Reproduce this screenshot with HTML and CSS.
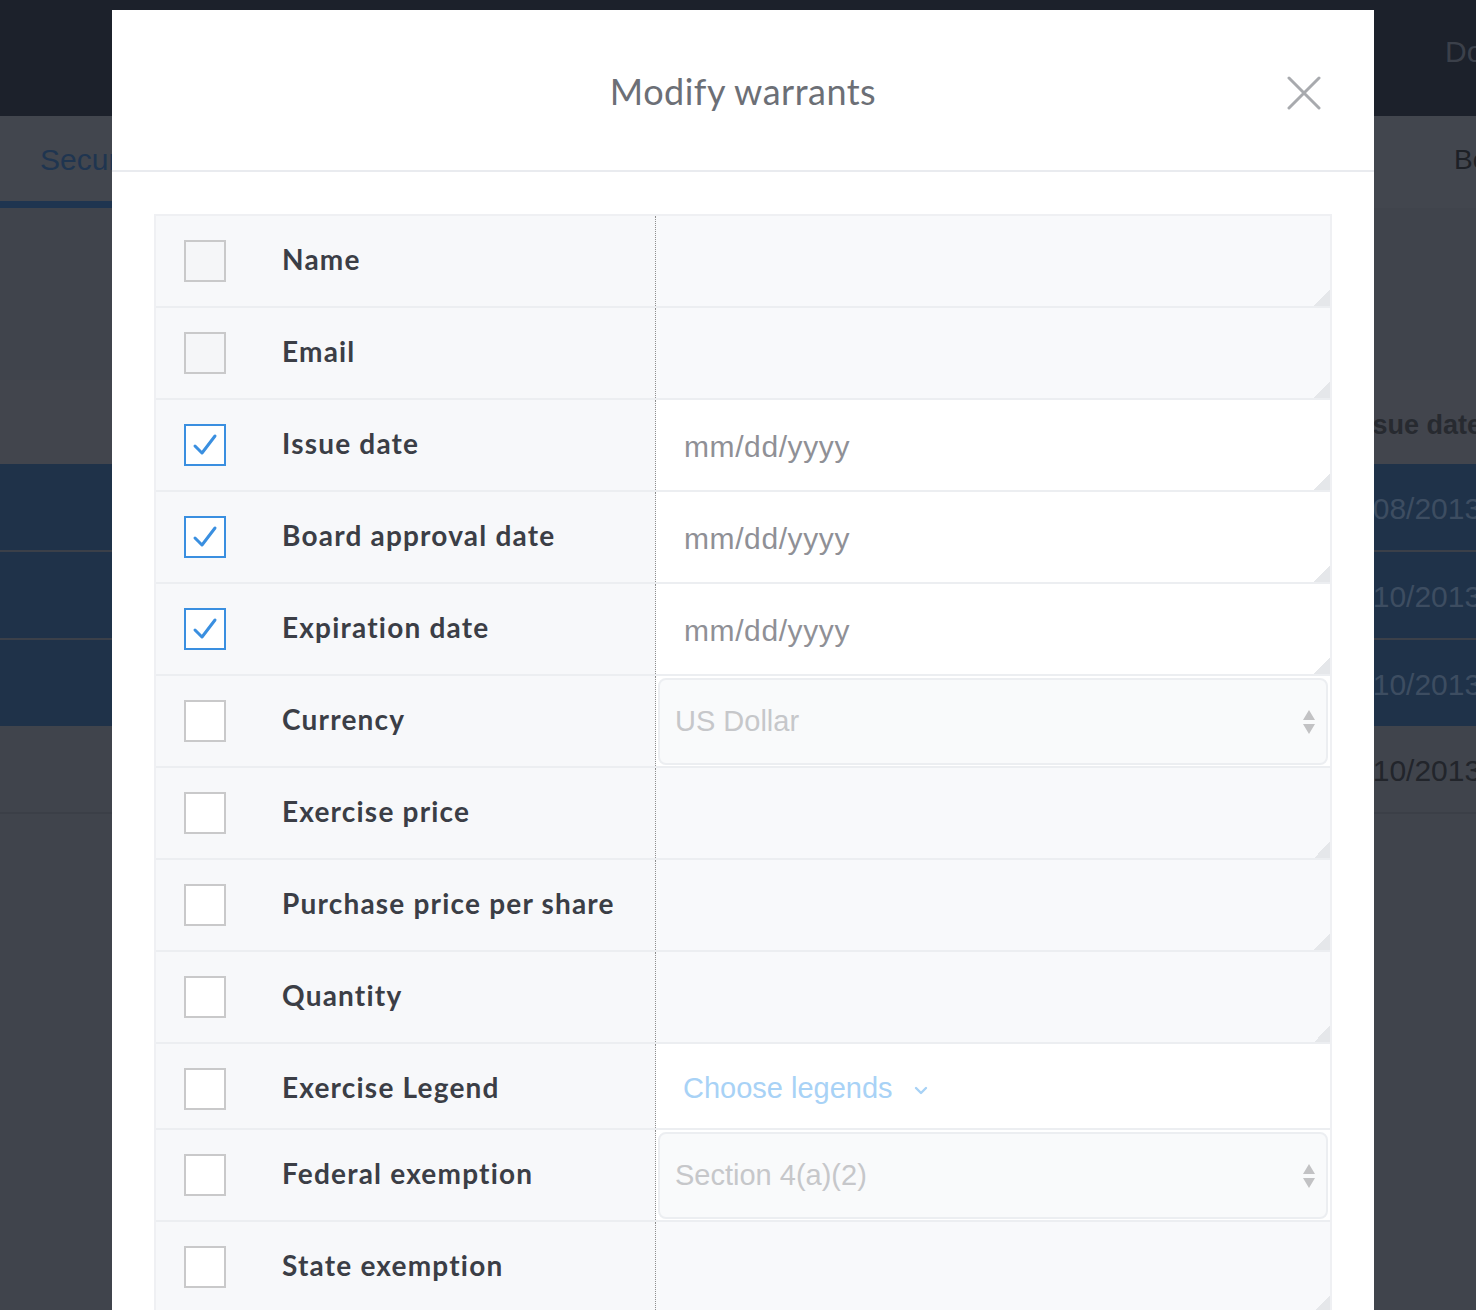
FILE: index.html
```html
<!DOCTYPE html>
<html lang="en">
<head>
<meta charset="utf-8">
<title>Modify warrants</title>
<link rel="stylesheet" href="styles.css">
</head>
<body>
<div class="app">
  <header class="topbar">
    <span class="topnav">Documents</span>
  </header>
  <nav class="tabs">
    <div class="tab active">Securities</div>
    <div class="tab other">Beneficial</div>
  </nav>
  <div class="grid-gap"></div>
  <div class="bg-row bg-head"><span>Issue date</span></div>
  <div class="bg-row bg-sel"><span>04/08/2013</span></div>
  <div class="bg-row bg-sel"><span>12/10/2013</span></div>
  <div class="bg-row bg-sel last"><span>12/10/2013</span></div>
  <div class="bg-row bg-plain"><span>12/10/2013</span></div>
</div>

<div class="modal">
  <div class="modal-header">
    <span></span>
    <h1 class="modal-title">Modify warrants</h1>
    <button class="close" aria-label="Close">
      <svg width="34" height="34" viewBox="0 0 34 34"><path d="M2 2 L32 32 M32 2 L2 32" stroke="#a8aaae" stroke-width="3" stroke-linecap="round" fill="none"/></svg>
    </button>
  </div>
  <div class="modal-body">
    <div class="fields">
      <div class="row">
        <div class="label-cell"><span class="cb cb-disabled"></span><span class="label">Name</span></div>
        <div class="field disabled"></div>
      </div>
      <div class="row">
        <div class="label-cell"><span class="cb cb-disabled"></span><span class="label">Email</span></div>
        <div class="field disabled"></div>
      </div>
      <div class="row">
        <div class="label-cell"><span class="cb checked"><svg width="38" height="38" viewBox="2 2 38 38"><path d="M11 22 L18 29 L31 12" stroke="#3a8fe0" stroke-width="3" stroke-linecap="round" stroke-linejoin="round" fill="none"/></svg></span><span class="label">Issue date</span></div>
        <div class="field input"><span class="placeholder">mm/dd/yyyy</span></div>
      </div>
      <div class="row">
        <div class="label-cell"><span class="cb checked"><svg width="38" height="38" viewBox="2 2 38 38"><path d="M11 22 L18 29 L31 12" stroke="#3a8fe0" stroke-width="3" stroke-linecap="round" stroke-linejoin="round" fill="none"/></svg></span><span class="label">Board approval date</span></div>
        <div class="field input"><span class="placeholder">mm/dd/yyyy</span></div>
      </div>
      <div class="row">
        <div class="label-cell"><span class="cb checked"><svg width="38" height="38" viewBox="2 2 38 38"><path d="M11 22 L18 29 L31 12" stroke="#3a8fe0" stroke-width="3" stroke-linecap="round" stroke-linejoin="round" fill="none"/></svg></span><span class="label">Expiration date</span></div>
        <div class="field input"><span class="placeholder">mm/dd/yyyy</span></div>
      </div>
      <div class="row">
        <div class="label-cell"><span class="cb"></span><span class="label">Currency</span></div>
        <div class="field select">
          <div class="select-box"><span class="select-text">US Dollar</span>
            <svg class="arrows" width="14" height="26" viewBox="0 0 14 26"><path d="M7 1 L13 11 L1 11 Z M1 15 L13 15 L7 25 Z" fill="#c2c2c4"/></svg>
          </div>
        </div>
      </div>
      <div class="row">
        <div class="label-cell"><span class="cb"></span><span class="label">Exercise price</span></div>
        <div class="field disabled"></div>
      </div>
      <div class="row">
        <div class="label-cell"><span class="cb"></span><span class="label">Purchase price per share</span></div>
        <div class="field disabled"></div>
      </div>
      <div class="row">
        <div class="label-cell"><span class="cb"></span><span class="label">Quantity</span></div>
        <div class="field disabled"></div>
      </div>
      <div class="row row-legend">
        <div class="label-cell"><span class="cb"></span><span class="label">Exercise Legend</span></div>
        <div class="field legend"><span class="legend-text">Choose legends</span>
          <svg class="chev" width="14" height="9" viewBox="0 0 14 9"><path d="M2 2 L7 7 L12 2" stroke="#a8d2f6" stroke-width="2.4" stroke-linecap="round" stroke-linejoin="round" fill="none"/></svg>
        </div>
      </div>
      <div class="row">
        <div class="label-cell"><span class="cb"></span><span class="label">Federal exemption</span></div>
        <div class="field select">
          <div class="select-box"><span class="select-text">Section 4(a)(2)</span>
            <svg class="arrows" width="14" height="26" viewBox="0 0 14 26"><path d="M7 1 L13 11 L1 11 Z M1 15 L13 15 L7 25 Z" fill="#c2c2c4"/></svg>
          </div>
        </div>
      </div>
      <div class="row">
        <div class="label-cell"><span class="cb"></span><span class="label">State exemption</span></div>
        <div class="field disabled"></div>
      </div>
    </div>
  </div>
</div>
</body>
</html>
```
FILE: styles.css
```css
* { box-sizing: border-box; }
html, body { margin: 0; height: 1310px; overflow: hidden; }
body {
  background: #40444c;
  font-family: "Liberation Sans", Arial, sans-serif;
  position: relative;
}

/* ---------- background page ---------- */
.app { overflow: hidden; }
.topbar {
  height: 116px;
  background: #1c212b;
  display: flex;
  align-items: center;
  padding-bottom: 12px;
}
.topnav {
  flex: none;
  margin-left: 1445px;
  font-size: 30px;
  color: #3b404a;
  white-space: nowrap;
}
.tabs {
  height: 92px;
  background: #42464e;
  display: flex;
}
.tab {
  flex: none;
  display: flex;
  align-items: center;
  font-size: 30px;
  white-space: nowrap;
}
.tab.active {
  width: 300px;
  padding-left: 40px;
  padding-top: 2px;
  color: #1f3550;
  border-bottom: 7px solid #1f3550;
}
.tab.other {
  margin-left: 1154px;
  color: #1d2026;
  font-size: 28px;
  padding-bottom: 4px;
}
.grid-gap { height: 172px; }
.bg-row {
  display: flex;
  align-items: center;
  padding-left: 1331px;
  padding-top: 4px;
  font-size: 30px;
  white-space: nowrap;
}
.bg-head {
  height: 84px;
  background: #42454d;
  color: #272a30;
  font-weight: 700;
  font-size: 27px;
  padding-left: 1350px;
  padding-top: 6px;
}
.bg-sel {
  height: 88px;
  background: #1f3249;
  color: #3d4d61;
  border-bottom: 2px solid #3b4049;
}
.bg-sel.last { border-bottom: none; height: 86px; }
.bg-plain {
  height: 88px;
  color: #22252b;
  border-bottom: 2px solid #3b3f47;
}

/* ---------- modal ---------- */
.modal {
  position: absolute;
  left: 112px;
  top: 10px;
  width: 1262px;
  height: 1320px;
  background: #fff;
}
.modal-header {
  height: 162px;
  border-bottom: 2px solid #e9ebef;
  display: grid;
  grid-template-columns: 1fr auto 1fr;
  align-items: center;
  padding: 2px 53px 0 53px;
}
.modal-title {
  margin: 0;
  font-family: Lato, "Open Sans", sans-serif;
  font-weight: 400;
  font-size: 36px;
  letter-spacing: 0.5px;
  color: #6c6f76;
}
.close {
  justify-self: end;
  border: 0;
  background: none;
  padding: 0;
  width: 34px;
  height: 34px;
  margin-top: 4px;
  cursor: pointer;
}
.close svg { display: block; }

.modal-body { padding: 42px 42px 0 42px; }

.fields {
  border: 2px solid #eff0f3;
  border-bottom: none;
}
.row {
  display: grid;
  grid-template-columns: 500px 1fr;
  height: 92px;
  border-bottom: 2px solid #eceef1;
}
.row-legend { height: 86px; }

.label-cell {
  background: #f7f8fa;
  border-right: 1px dotted #8f8f8f;
  display: flex;
  align-items: center;
  padding-left: 28px;
}
.row-legend .label-cell { padding-top: 6px; }
.cb {
  width: 42px;
  height: 42px;
  flex: none;
  border: 2px solid #c9c9ca;
  background: #fff;
  margin-right: 56px;
  display: flex;
}
.cb-disabled { background: #f5f6f8; }
.cb.checked { border-color: #3a8fe0; }
.label {
  font-family: Lato, "Open Sans", sans-serif;
  font-weight: 700;
  font-size: 28px;
  letter-spacing: 1.2px;
  color: #3b3e46;
  white-space: nowrap;
  margin-top: -4px;
}

.field {
  position: relative;
  display: flex;
  align-items: center;
}
.field.disabled { background: #f8f9fb; }
.field.input { background: #fff; padding-left: 28px; }
.field.disabled::after,
.field.input::after {
  content: "";
  position: absolute;
  right: 0;
  bottom: 0;
  width: 16px;
  height: 16px;
  background: linear-gradient(135deg, transparent 50%, #e5e7ea 50%);
}
.placeholder {
  font-size: 30px;
  letter-spacing: 0.6px;
  color: #8f9096;
  padding-top: 4px;
}
.field.select { padding: 2px 2px 1px 2px; align-items: stretch; }
.select-box {
  flex: 1;
  border: 2px solid #eceef1;
  border-radius: 8px;
  background: #f9fafb;
  display: flex;
  align-items: center;
  justify-content: space-between;
  padding: 0 10px 0 15px;
}
.select-text {
  font-size: 29px;
  color: #c6c7ca;
}
.arrows { display: block; margin-top: 0; }
.field.legend { background: #fff; padding-left: 27px; padding-top: 4px; }
.legend-text {
  font-size: 29px;
  color: #a8d2f6;
}
.chev { margin-left: 21px; margin-top: 4px; }
```
